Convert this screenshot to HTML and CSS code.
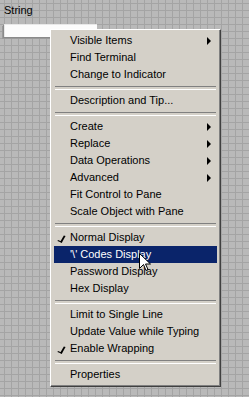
FILE: index.html
```html
<!DOCTYPE html>
<html lang="en">
<head>
    <meta charset="UTF-8">
    <title>String Control Menu</title>
    <link rel="stylesheet" href="styles.css">
</head>
<body>
    <div class="panel">
        <div class="control">
            <div class="control-label">String</div>
            <div class="control-box"></div>
        </div>

        <ul class="popup-menu">
            <li class="item has-sub">Visible Items</li>
            <li class="item">Find Terminal</li>
            <li class="item">Change to Indicator</li>
            <li class="sep"></li>
            <li class="item">Description and Tip...</li>
            <li class="sep"></li>
            <li class="item has-sub">Create</li>
            <li class="item has-sub">Replace</li>
            <li class="item has-sub">Data Operations</li>
            <li class="item has-sub">Advanced</li>
            <li class="item">Fit Control to Pane</li>
            <li class="item">Scale Object with Pane</li>
            <li class="sep"></li>
            <li class="item checked">Normal Display</li>
            <li class="item active">'\' Codes Display</li>
            <li class="item">Password Display</li>
            <li class="item">Hex Display</li>
            <li class="sep"></li>
            <li class="item">Limit to Single Line</li>
            <li class="item">Update Value while Typing</li>
            <li class="item checked">Enable Wrapping</li>
            <li class="sep"></li>
            <li class="item">Properties</li>
        </ul>

        <!-- mouse pointer -->
        <svg class="pointer" width="12" height="19" viewBox="0 0 12 19">
            <path d="M0.5 0.5 L0.5 15.5 L4.5 11.5 L7 17.5 L9 16.5 L6.5 11 L11.5 11 Z" fill="#fff" stroke="#000" stroke-width="1"/>
        </svg>
    </div>
</body>
</html>
```

FILE: styles.css
```css
* {
    margin: 0;
    padding: 0;
    box-sizing: border-box;
}

body {
    width: 249px;
    height: 397px;
    overflow: hidden;
    font-family: Tahoma, 'Liberation Sans', Arial, sans-serif;
    font-size: 11px;
    color: #000;
}

.panel {
    position: relative;
    width: 249px;
    height: 397px;
    background-color: #b9b9b9;
    background-image:
        linear-gradient(to right, #a4a4a4 1px, transparent 1px),
        linear-gradient(to bottom, #a4a4a4 1px, transparent 1px);
    background-size: 7px 7px;
    background-position: 4px 3px;
}

.control {
    padding: 4px 0 0 3px;
}

.control-label {
    line-height: 13px;
    height: 17px;
    padding-left: 1px;
}

.control-box {
    width: 93px;
    height: 13px;
    margin-left: 1px;
    margin-top: 3px;
    background: #fcfcfc;
    border-top: 1px solid #e8e8e8;
    border-left: 1px solid #e8e8e8;
    box-shadow: -1px 1px 0 #8a8a8a, -2px 2px 0 #9a9a9a;
}

.popup-menu {
    position: absolute;
    left: 50px;
    top: 29px;
    width: 171px;
    list-style: none;
    background: #d4d0c8;
    border-top: 1px solid #ffffff;
    border-left: 1px solid #ffffff;
    border-right: 1px solid #404040;
    border-bottom: 1px solid #404040;
    box-shadow: inset -1px -1px 0 #808080;
    padding: 2px 3px 3px 3px;
}

.item {
    position: relative;
    height: 17px;
    line-height: 17px;
    padding-left: 16px;
    white-space: nowrap;
}

.item.active {
    background: #0a246a;
    color: #fff;
}

.item.has-sub::after {
    content: "";
    position: absolute;
    right: 6px;
    top: 5px;
    border-left: 4px solid #000;
    border-top: 4px solid transparent;
    border-bottom: 4px solid transparent;
}

.item.checked::before {
    content: "";
    position: absolute;
    left: 5px;
    top: 6px;
    width: 3px;
    height: 6px;
    border-right: 2px solid #000;
    border-bottom: 1px solid #000;
    transform: skewX(-12deg) rotate(20deg);
}

.sep {
    height: 9px;
    padding: 3px 0 0 0;
    margin: 0 1px;
}

.sep::before {
    content: "";
    display: block;
    height: 2px;
    border-top: 1px solid #808080;
    border-bottom: 1px solid #ffffff;
}

.pointer {
    position: absolute;
    left: 139px;
    top: 253px;
}
```
